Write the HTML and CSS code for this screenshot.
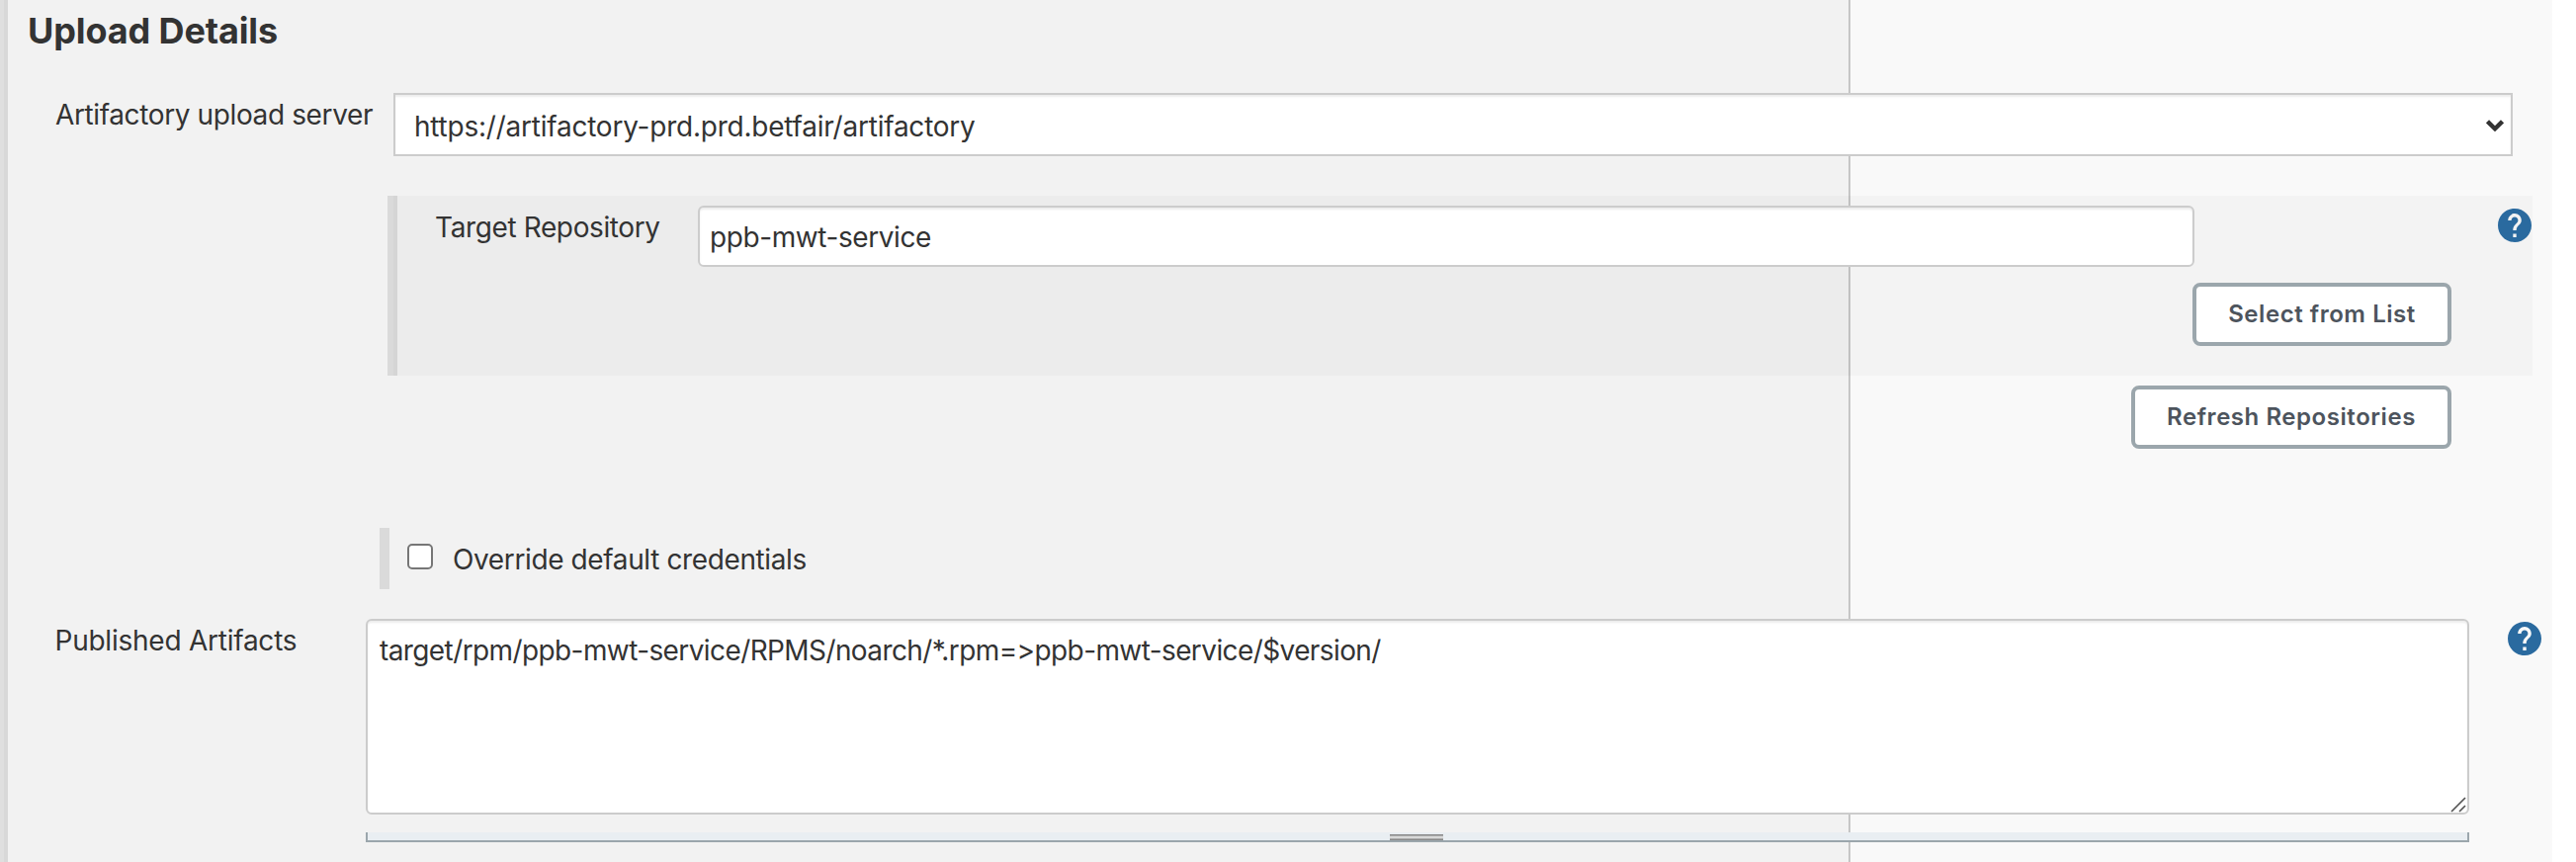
FILE: index.html
```html
<!DOCTYPE html>
<html lang="en">
<head>
<meta charset="utf-8">
<title>Upload Details</title>
<link rel="stylesheet" href="styles.css">
</head>
<body>
<main class="page">
  <h2 class="title">Upload Details</h2>

  <div class="row server-row">
    <label class="label server-label" for="server">Artifactory upload server</label>
    <div class="select-wrap">
      <select class="field select" id="server"><option>https://artifactory-prd.prd.betfair/artifactory</option></select>
      <svg class="chevron" viewBox="0 0 18 12" width="18" height="12"><path d="M1.5 1.8 L9 9.2 L16.5 1.8" fill="none" stroke="#333" stroke-width="4.4"/></svg>
    </div>
  </div>

  <section class="repo">
    <label class="label repo-label" for="repo">Target Repository</label>
    <div class="repo-main">
      <input class="field input" id="repo" type="text" value="ppb-mwt-service">
      <button class="btn" type="button">Select from List</button>
    </div>
    <svg class="help" viewBox="2 2 20 20" width="34" height="34"><path d="M12 2C6.48 2 2 6.48 2 12s4.48 10 10 10 10-4.48 10-10S17.52 2 12 2zm1 17h-2v-2h2v2zm2.07-7.75l-.9.92C13.45 12.9 13 13.5 13 15h-2v-.5c0-1.1.45-2.1 1.17-2.83l1.24-1.26c.37-.36.59-.86.59-1.41 0-1.1-.9-2-2-2s-2 .9-2 2H8c0-2.21 1.79-4 4-4s4 1.79 4 4c0 .88-.36 1.68-.93 2.25z"/></svg>
  </section>

  <div class="refresh-row"><button class="btn btn-refresh" type="button">Refresh Repositories</button></div>

  <div class="override">
    <input class="check" id="override" type="checkbox">
    <label class="label override-label" for="override">Override default credentials</label>
  </div>

  <div class="row artifacts-row">
    <label class="label artifacts-label" for="artifacts">Published Artifacts</label>
    <div class="area-col">
      <div class="area-wrap">
        <textarea class="field area" id="artifacts">target/rpm/ppb-mwt-service/RPMS/noarch/*.rpm=&gt;ppb-mwt-service/$version/</textarea>
        <svg class="grip" viewBox="0 0 16 16" width="16" height="16"><path d="M1 15 L15 1 M9 15 L15 9" fill="none" stroke="#555" stroke-width="1.7"/></svg>
      </div>
      <div class="handle"><i class="handle-grip"></i></div>
    </div>
    <svg class="help help-artifacts" viewBox="2 2 20 20" width="34" height="34"><path d="M12 2C6.48 2 2 6.48 2 12s4.48 10 10 10 10-4.48 10-10S17.52 2 12 2zm1 17h-2v-2h2v2zm2.07-7.75l-.9.92C13.45 12.9 13 13.5 13 15h-2v-.5c0-1.1.45-2.1 1.17-2.83l1.24-1.26c.37-.36.59-.86.59-1.41 0-1.1-.9-2-2-2s-2 .9-2 2H8c0-2.21 1.79-4 4-4s4 1.79 4 4c0 .88-.36 1.68-.93 2.25z"/></svg>
  </div>
</main>
</body>
</html>
```
FILE: styles.css
```css
* { box-sizing: border-box; }
body {
  margin: 0;
  background: #fff;
  color: #333;
  font-family: Inter, "Liberation Sans", sans-serif;
  overflow: hidden;
}
.page {
  width: 2606px;
  height: 872px;
  overflow: hidden;
  display: flex;
  flex-direction: column;
  background: linear-gradient(to right, #dfdfdf 4px, #d8d8d8 4px 8px, #f2f2f2 8px 1870px, #c6c6c6 1870px 1872px, #f9f9f9 1872px 2582px, #fff 2582px);
}
.title {
  margin: 0;
  height: 94px;
  padding: 9px 0 0 28px;
  font-size: 36px;
  line-height: 44px;
  font-weight: 700;
  letter-spacing: -.12px;
  flex: none;
}
.label { font-size: 28px; line-height: 34px; letter-spacing: -.38px; white-space: nowrap; flex: none; }
.row { display: flex; align-items: flex-start; flex: none; }
.server-row { height: 104px; padding-left: 56px; }
.server-label { width: 342px; padding-top: 5px; }
.field {
  display: block;
  margin: 0;
  border: 2px solid #ccc;
  border-radius: 6px;
  background: #fff;
  box-shadow: inset 0 2px 2px rgba(0, 0, 0, .075);
  color: #333;
  font: 28px/34px Inter, "Liberation Sans", sans-serif;
  font-feature-settings: "calt" 0;
  outline: none;
}
.select-wrap { position: relative; width: 2144px; }
.select { width: 100%; height: 64px; border-radius: 0; appearance: none; padding: 4px 19px 0; letter-spacing: -.23px; }
.chevron { position: absolute; right: 9px; top: 27px; }
.repo {
  display: flex;
  align-items: flex-start;
  flex: none;
  margin-left: 392px;
  width: 2170px;
  height: 182px;
  padding-top: 10px;
  border-left: 6px solid #dadada;
  background: rgba(0, 0, 0, .025);
  box-shadow: inset 4px 0 #d5d5d5;
}
.repo-label { width: 308px; padding: 5px 0 0 42px; }
.repo-main { width: 1774px; display: flex; flex-direction: column; gap: 16px; }
.input { width: 1514px; height: 62px; padding: 2px 10px 0; letter-spacing: -.42px; }
.btn {
  align-self: flex-end;
  width: 262px;
  height: 64px;
  padding: 0;
  border: 4px solid #9ba6ac;
  border-radius: 8px;
  background: #fff;
  color: #4d545d;
  font: 600 24px/30px Inter, "Liberation Sans", sans-serif;
  letter-spacing: .55px;
  white-space: nowrap;
}
.help { margin: 3px 0 0 47px; flex: none; fill: #2a6a9f; }
.refresh-row { display: flex; justify-content: flex-end; width: 2480px; height: 154px; padding-top: 10px; flex: none; }
.btn-refresh { width: 324px; align-self: flex-start; }
.override {
  display: flex;
  flex: none;
  align-items: flex-start;
  margin-left: 384px;
  height: 62px;
  border-left: 10px solid #dadada;
  padding: 15px 0 0 18px;
}
.check {
  appearance: none;
  margin: 1px 0 0;
  width: 26px;
  height: 26px;
  border: 2px solid #767676;
  border-radius: 5px;
  background: #fff;
}
.override-label { margin-left: 20px; }
.artifacts-row { padding: 30px 0 0 55.5px; }
.artifacts-label { width: 314.5px; padding-top: 5px; letter-spacing: -.24px; }
.area-col { width: 2128px; }
.area-wrap { position: relative; }
.area { width: 100%; height: 198px; resize: none; padding: 13px 12px; overflow: hidden; white-space: pre; letter-spacing: -.6px; }
.grip { position: absolute; right: 3px; bottom: 2px; }
.handle {
  margin-top: 18px;
  height: 10px;
  border: solid #9ba6ac;
  border-width: 0 2px 2px;
  background: #e9eef2;
  display: flex;
  justify-content: center;
  align-items: flex-end;
}
.handle-grip { width: 54px; height: 6px; margin-right: 2px; background: linear-gradient(#888 1px, #aaa 1px 2px, #d8d8d8 2px 4px, #aaa 4px 5px, #888 5px); }
.help-artifacts { margin: 3px 0 0 39px; }
```
